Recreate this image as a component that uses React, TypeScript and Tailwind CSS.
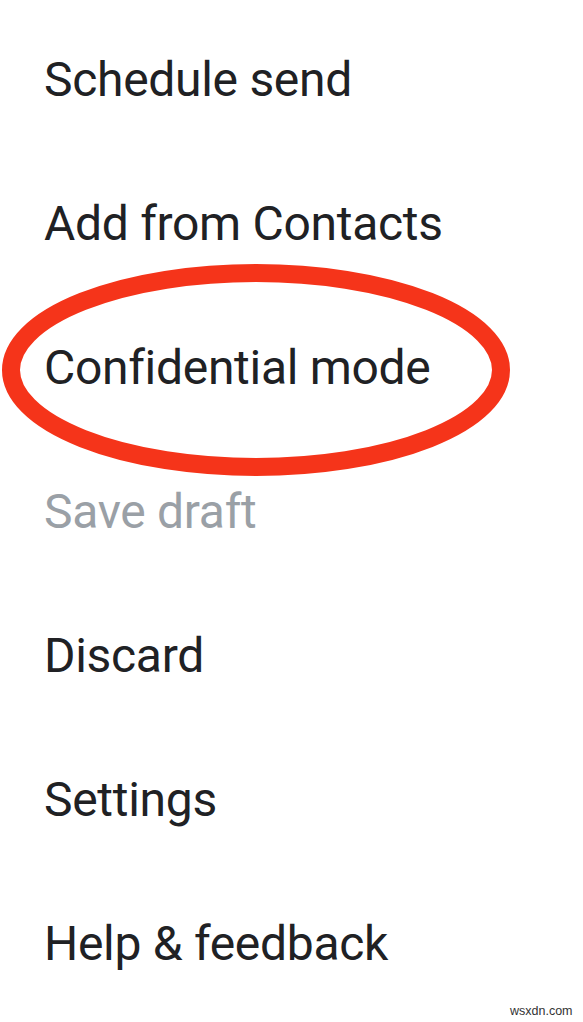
const items = [
  { label: 'Schedule send' },
  { label: 'Add from Contacts' },
  { label: 'Confidential mode', circled: true },
  { label: 'Save draft', disabled: true },
  { label: 'Discard' },
  { label: 'Settings' },
  { label: 'Help & feedback' },
];

const App = () => {
  return (
    <div className="relative h-[1022px] w-full overflow-hidden bg-white font-['Roboto',sans-serif]">
      <ul className="pt-2">
        {items.map((item) => (
          <li
            key={item.label}
            className={`h-[144px] pl-[44px] text-[48px] leading-[144px] tracking-[-0.3px] ${
              item.disabled ? 'text-[#9aa0a6]' : 'text-[#202124]'
            }`}
          >
            {item.label}
          </li>
        ))}
      </ul>

      {/* red highlight around Confidential mode */}
      <svg
        className="pointer-events-none absolute left-0 top-[255px]"
        width="583"
        height="230"
        viewBox="0 0 583 230"
      >
        <ellipse
          cx="256"
          cy="115"
          rx="245"
          ry="97"
          fill="none"
          stroke="#f5341a"
          strokeWidth="18"
        />
      </svg>

      <span className="absolute left-[510px] top-[1002px] font-['Liberation_Sans',sans-serif] text-[12.5px] text-[#333]">
        wsxdn.com
      </span>
    </div>
  );
};

export default App;
